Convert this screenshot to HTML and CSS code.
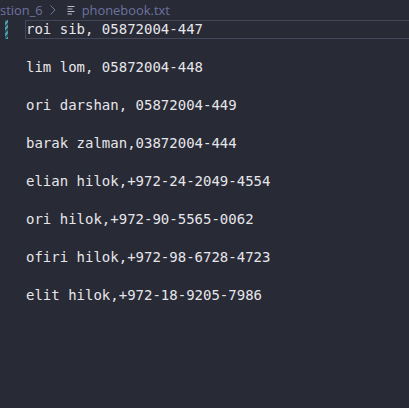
FILE: index.html
```html
<!DOCTYPE html>
<html>
<head>
<meta charset="utf-8">
<link rel="stylesheet" href="styles.css">
</head>
<body>
<div class="crumbs">
  <span class="seg first">stion_6</span>
  <svg class="chev" width="8" height="12" viewBox="0 0 8 12"><path d="M1.5 1.5 L6 6 L1.5 10.5" fill="none" stroke="currentColor" stroke-width="1"/></svg>
  <svg class="file" width="8" height="12" viewBox="0 0 8 12"><path d="M0.5 2.5h7M0.5 5h5M0.5 7.5h7M0.5 10h4.5" stroke="currentColor" stroke-width="1.1"/></svg>
  <span class="seg">phonebook.txt</span>
</div>
<div class="editor">
  <div class="line current"><span class="mod"></span><span class="txt">roi sib, 05872004-447</span></div>
  <div class="line"><span class="txt"></span></div>
  <div class="line"><span class="txt">lim lom, 05872004-448</span></div>
  <div class="line"><span class="txt"></span></div>
  <div class="line"><span class="txt">ori darshan, 05872004-449</span></div>
  <div class="line"><span class="txt"></span></div>
  <div class="line"><span class="txt">barak zalman,03872004-444</span></div>
  <div class="line"><span class="txt"></span></div>
  <div class="line"><span class="txt">elian hilok,+972-24-2049-4554</span></div>
  <div class="line"><span class="txt"></span></div>
  <div class="line"><span class="txt">ori hilok,+972-90-5565-0062</span></div>
  <div class="line"><span class="txt"></span></div>
  <div class="line"><span class="txt">ofiri hilok,+972-98-6728-4723</span></div>
  <div class="line"><span class="txt"></span></div>
  <div class="line"><span class="txt">elit hilok,+972-18-9205-7986</span></div>
</div>
</body>
</html>
```
FILE: styles.css
```css
html, body {
  margin: 0;
  padding: 0;
  background: #282a36;
  height: 100%;
}
body {
  overflow: hidden;
}
.crumbs {
  height: 19px;
  display: flex;
  align-items: center;
  font-family: "Open Sans", "Noto Sans", sans-serif;
  font-size: 12.9px;
  color: #6d73a0;
  white-space: nowrap;
}
.first {
  margin-left: 0;
}
.chev {
  margin: 0 10px 0 6px;
  color: #6d73a0;
}
.file {
  margin-right: 7px;
  color: #b8bbd0;
}
.editor {
  padding-top: 1px;
  font-family: "DejaVu Sans Mono", monospace;
  font-size: 14px;
  color: #e6e6ea;
}
.line {
  position: relative;
  height: 19px;
  line-height: 19px;
  padding-left: 26px;
  white-space: pre;
}
.line.current .txt {
  display: block;
  border: 1px solid #44475a;
  border-right: none;
  margin-left: -1px;
  height: 17px;
  line-height: 17px;
}
.mod {
  position: absolute;
  left: 5px;
  top: 0;
  width: 3px;
  height: 19px;
  background: repeating-linear-gradient(-45deg, #4d9ba8 0 2px, #2e5560 2px 4px);
}
```
